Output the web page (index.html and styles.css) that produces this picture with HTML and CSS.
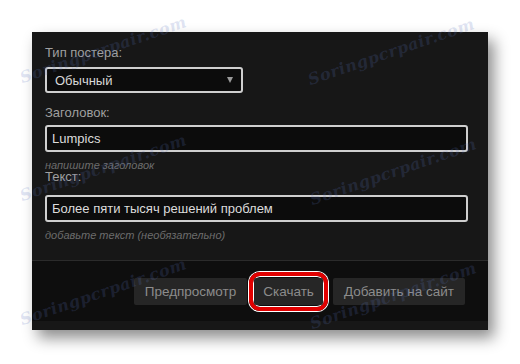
FILE: index.html
```html
<!DOCTYPE html>
<html lang="ru">
<head>
    <meta charset="UTF-8">
    <meta name="viewport" content="width=device-width, initial-scale=1.0">
    <title>Постер</title>
    <link rel="stylesheet" href="styles.css">
</head>
<body>
    <div class="dialog">
        <div class="dialog-body">
            <p class="field-label">Тип постера:</p>
            <div class="select-box">
                <span>Обычный</span>
                <span class="select-arrow"></span>
            </div>

            <p class="field-label label-title">Заголовок:</p>
            <div class="text-input">Lumpics</div>
            <p class="hint">напишите заголовок</p>

            <p class="field-label label-text">Текст:</p>
            <div class="text-input">Более пяти тысяч решений проблем</div>
            <p class="hint">добавьте текст (необязательно)</p>
        </div>
        <div class="dialog-footer">
            <button class="footer-button">Предпросмотр</button>
            <span class="highlight">
                <button class="footer-button">Скачать</button>
            </span>
            <button class="footer-button">Добавить на сайт</button>
        </div>
    </div>

    <!-- watermark over the screenshot -->
    <span class="mark" style="left: 24px; top: 68px;">Soringpcrpair.com</span>
    <span class="mark" style="left: 312px; top: 70px;">Soringpcrpair.com</span>
    <span class="mark" style="left: 24px; top: 186px;">Soringpcrpair.com</span>
    <span class="mark" style="left: 314px; top: 190px;">Soringpcrpair.com</span>
    <span class="mark" style="left: 24px; top: 310px;">Soringpcrpair.com</span>
    <span class="mark" style="left: 314px; top: 314px;">Soringpcrpair.com</span>
</body>
</html>
```

FILE: styles.css
```css
body{
    margin: 0;
    padding: 32px;
    background-color: #ffffff;
    font-family: "Liberation Sans", Arial, sans-serif;
    position: relative;
    height: 300px;
    overflow: hidden;
}
.dialog{
    width: 456px;
    background-color: #171717;
    padding-bottom: 9px;
    box-shadow: 6px 8px 14px rgba(0, 0, 0, 0.45);
}
.dialog-body{
    padding: 13px 20px 19px 13px;
}
.field-label{
    margin: 0;
    font-size: 13px;
    line-height: 15px;
    color: #a0a0a0;
}
.label-title{
    margin-top: 12px;
}
.label-text{
    line-height: 11px;
}
.select-box{
    display: flex;
    justify-content: space-between;
    align-items: center;
    box-sizing: border-box;
    width: 198px;
    height: 26px;
    margin-top: 7px;
    padding: 0 8px;
    border: 2px solid #cfcfcf;
    border-radius: 3px;
    background-color: #0c0c0c;
    color: #d8d8d8;
    font-size: 13px;
}
.select-arrow{
    width: 0;
    height: 0;
    border-left: 3px solid transparent;
    border-right: 3px solid transparent;
    border-top: 6px solid #9a9a9a;
}
.text-input{
    box-sizing: border-box;
    width: 423px;
    height: 27px;
    margin-top: 5px;
    padding: 0 5px;
    border: 2px solid #cfcfcf;
    border-radius: 3px;
    background-color: #0c0c0c;
    color: #dcdcdc;
    font-size: 13px;
    line-height: 23px;
}
.label-text + .text-input{
    margin-top: 13px;
}
.hint{
    margin: 8px 0 0 0;
    font-size: 11px;
    line-height: 11px;
    font-style: italic;
    color: #6c6c6c;
}
.dialog-footer{
    display: flex;
    justify-content: flex-end;
    align-items: center;
    height: 60px;
    padding-right: 23px;
    border-top: 1px solid #2b2b2b;
    background-color: #0e0e0e;
}
.footer-button{
    height: 27px;
    padding: 0 11px;
    border: none;
    border-radius: 2px;
    background-color: #262626;
    color: #8c8c8c;
    font-family: "Liberation Sans", Arial, sans-serif;
    font-size: 13.5px;
}
.highlight{
    display: flex;
    margin: 0 5px 0 2px;
    padding: 2px 1px;
    border: 4px solid #e10000;
    border-radius: 11px;
    box-shadow: 0 0 0 1px #ffffff, inset 0 0 0 1px #ffffff;
}
.highlight .footer-button{
    padding: 0 9px;
}
.mark{
    position: absolute;
    transform: rotate(-19deg);
    transform-origin: left bottom;
    font-family: "DejaVu Serif", serif;
    font-style: italic;
    font-weight: bold;
    font-size: 16px;
    line-height: 20px;
    letter-spacing: 0.5px;
    color: rgba(90, 115, 190, 0.2);
    white-space: nowrap;
}
```
